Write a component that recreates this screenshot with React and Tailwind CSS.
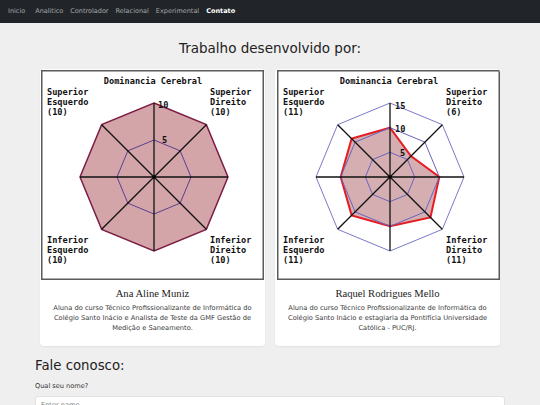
import React from "react";

const S = 0.70710678;
function octa(cx, cy, vals, max, R) {
  const dirs = [[0,-1],[S,-S],[1,0],[S,S],[0,1],[-S,S],[-1,0],[-S,-S]];
  return dirs.map(([dx,dy],i)=>{
    const r = (vals[i]/max)*R;
    return `${(cx+dx*r).toFixed(2)},${(cy+dy*r).toFixed(2)}`;
  }).join(" ");
}
function axes(cx, cy, R) {
  const dirs = [[0,-1],[S,-S],[1,0],[S,S]];
  return dirs.map(([dx,dy],i)=>(
    <line key={i} x1={cx-dx*R} y1={cy-dy*R} x2={cx+dx*R} y2={cy+dy*R} stroke="#111" strokeWidth="1.3" />
  ));
}

const monoFont = { fontFamily: '"DejaVu Sans Mono", monospace', fontWeight: 700, fontSize: "8.6px" };

function Labels({ tl, tr, bl, br }) {
  const line = (x, y, arr) => arr.map((t, i) => (
    <text key={i} x={x} y={y + i * 10} style={monoFont} fill="#111">{t}</text>
  ));
  return (
    <g>
      <text x="112" y="14" textAnchor="middle" style={monoFont} fill="#111">Dominancia Cerebral</text>
      {line(6, 25, tl)}
      {line(169, 25, tr)}
      {line(6, 173, bl)}
      {line(169, 173, br)}
    </g>
  );
}

function ChartA() {
  const cx = 113, cy = 107, R = 74;
  const ten = [10,10,10,10,10,10,10,10];
  return (
    <svg width="223" height="210" viewBox="0 0 223 210" className="block">
      <rect x="0" y="0" width="223" height="210" fill="#fff" />
      <rect x="0.75" y="0.75" width="221.5" height="208.5" fill="none" stroke="#5a5a5a" strokeWidth="1.5" />
      <polygon points={octa(cx,cy,ten,10,R)} fill="#d3a5a9" stroke="#7d1f45" strokeWidth="1.5" />
      <polygon points={octa(cx,cy,ten,10,R/2)} fill="none" stroke="#5c3f8e" strokeWidth="1" />
      {axes(cx,cy,R)}
      <circle cx={cx} cy={cy} r="1.8" fill="#000" />
      <text x="117" y="38" style={monoFont} fill="#111">10</text>
      <text x="121" y="73" style={monoFont} fill="#111">5</text>
      <Labels tl={["Superior","Esquerdo","(10)"]} tr={["Superior","Direito","(10)"]} bl={["Inferior","Esquerdo","(10)"]} br={["Inferior","Direito","(10)"]} />
    </svg>
  );
}

function ChartB() {
  const cx = 113, cy = 107, R = 74;
  const data = [10,6,10,11.6,10,11,10,11];
  const ring = v => [v,v,v,v,v,v,v,v];
  return (
    <svg width="223" height="210" viewBox="0 0 223 210" className="block">
      <rect x="0" y="0" width="223" height="210" fill="#fff" />
      <rect x="0.75" y="0.75" width="221.5" height="208.5" fill="none" stroke="#5a5a5a" strokeWidth="1.5" />
      <polygon points={octa(cx,cy,ring(15),15,R)} fill="none" stroke="#7a7ac8" strokeWidth="1" />
      <polygon points={octa(cx,cy,data,15,R)} fill="rgba(165,85,90,0.48)" stroke="#e51e25" strokeWidth="2" />
      <polygon points={octa(cx,cy,ring(10),15,R)} fill="none" stroke="#6a64c0" strokeWidth="1" />
      <polygon points={octa(cx,cy,ring(5),15,R)} fill="none" stroke="#6a64c0" strokeWidth="1" />
      {axes(cx,cy,R)}
      <circle cx={cx} cy={cy} r="1.8" fill="#000" />
      <text x="118" y="39" style={monoFont} fill="#111">15</text>
      <text x="118" y="62" style={monoFont} fill="#111">10</text>
      <text x="123" y="86" style={monoFont} fill="#111">5</text>
      <Labels tl={["Superior","Esquerdo","(11)"]} tr={["Superior","Direito","(6)"]} bl={["Inferior","Esquerdo","(11)"]} br={["Inferior","Direito","(11)"]} />
    </svg>
  );
}

function Card({ chart, offset, name, lines }) {
  return (
    <div className="w-[225px] bg-white rounded-[4px] overflow-hidden shadow-[0_1px_2px_rgba(0,0,0,0.06)] flex flex-col">
      <div className={offset}>{chart}</div>
      <div className="pt-[7px] pb-[13px] text-center">
        <div className="text-[10.6px] leading-[14px] text-[#222] font-['Liberation_Serif',serif]">{name}</div>
        <div className="mt-[2px] text-[6.7px] leading-[10px] text-[#3a3a3a] whitespace-nowrap">
          {lines.map((l, i) => <div key={i}>{l}</div>)}
        </div>
      </div>
    </div>
  );
}

export default function App() {
  const nav = ["Inicio", "Analitico", "Controlador", "Relacional", "Experimental"];
  return (
    <div className="min-h-screen bg-[#efefef] font-['DejaVu_Sans',sans-serif]">
      <div className="h-[23px] bg-[#212529] flex items-center pl-[8px] text-[6.5px]">
        <span className="text-[#a4a6a8] mr-[10px]">Inicio</span>
        {nav.slice(1).map(n => (
          <span key={n} className="text-[#a4a6a8] mr-[7px]">{n}</span>
        ))}
        <span className="text-white font-bold">Contato</span>
      </div>
      <div className="w-[470px] mx-auto">
        <h1 className="mt-[15px] text-center text-[13.5px] leading-[20px] text-[#222]">Trabalho desenvolvido por:</h1>
        <div className="mt-[11px] px-[5px] flex gap-[10px]">
          <Card chart={<ChartA />} offset="ml-[1px] pt-[1px]" name="Ana Aline Muniz"
            lines={["Aluna do curso Técnico Profissionalizante de Informática do", "Colégio Santo Inácio e Analista de Teste da GMF Gestão de", "Medição e Saneamento."]} />
          <Card chart={<ChartB />} offset="ml-[2px] pt-[1px]" name="Raquel Rodrigues Mello"
            lines={["Aluna do curso Técnico Profissionalizante de Informática do", "Colégio Santo Inácio e estagiaria da Pontifícia Universidade", "Católica - PUC/RJ."]} />
        </div>
        <h2 className="mt-[11px] text-[13.3px] leading-[18px] text-[#222]">Fale conosco:</h2>
        <div className="mt-[6px] text-[6.6px] leading-[10px] text-[#333]">Qual seu nome?</div>
        <div className="mt-[5px] h-[20px] bg-white rounded-[3px] border border-[#e2e2e2] px-[5px] flex items-center text-[6.6px] text-[#777]">Enter name</div>
      </div>
    </div>
  );
}
